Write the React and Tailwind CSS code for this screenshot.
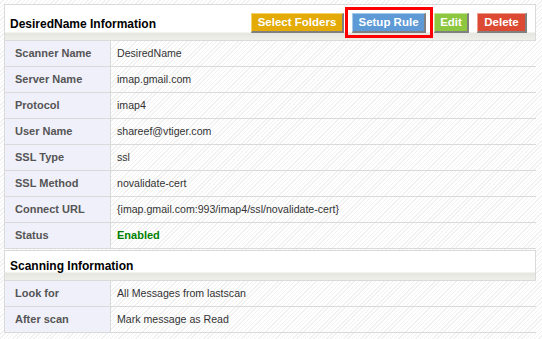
const info = [
  ['Scanner Name', 'DesiredName'],
  ['Server Name', 'imap.gmail.com'],
  ['Protocol', 'imap4'],
  ['User Name', 'shareef@vtiger.com'],
  ['SSL Type', 'ssl'],
  ['SSL Method', 'novalidate-cert'],
  ['Connect URL', '{imap.gmail.com:993/imap4/ssl/novalidate-cert}'],
  ['Status', 'Enabled'],
];

const scanning = [
  ['Look for', 'All Messages from lastscan'],
  ['After scan', 'Mark message as Read'],
];

const Button = ({ children, className }) => (
  <button
    className={`h-[20px] whitespace-nowrap px-0 text-[11.5px] font-bold text-white leading-none border-t border-l border-b-2 border-r-2 border-b-[#808080] border-r-[#808080] ${className}`}
  >
    {children}
  </button>
);

const Header = ({ title, tall, children }) => (
  <div
    className={`flex items-start justify-between border border-[#dadada] bg-[linear-gradient(to_bottom,#fff_0,#fff_calc(100%-8px),#e6e6e0_calc(100%-7px),#efefea_100%)] pl-[5px] pr-[8px] ${
      tall ? 'h-[37px]' : 'h-[31px]'
    }`}
  >
    <h2 className={`text-[12px] font-bold text-black ${tall ? 'mt-[10px]' : 'mt-[6px]'}`}>{title}</h2>
    {children}
  </div>
);

const Row = ({ label, value, status }) => (
  <div className="flex h-[26px] border-b border-l border-[#dadada]">
    <div className="flex w-[106px] items-center border-r border-[#dadada] bg-[#f0f0fa] pl-[10px] text-[11px] font-bold text-[#555]">
      {label}
    </div>
    <div
      className={`flex items-center pl-[6px] ${
        status ? 'text-[11px] font-bold text-[#008000]' : 'text-[10.6px] text-[#333]'
      }`}
    >
      {value}
    </div>
  </div>
);

export default function App() {
  return (
    <div className="h-[339px] w-[542px] overflow-hidden bg-[image:repeating-linear-gradient(135deg,#ffffff_0px,#ffffff_2px,#f1f1f1_2px,#f1f1f1_3px)] pl-[4px] pr-[6px] pt-[4px] font-['Liberation_Sans',Arial,sans-serif]">
      <Header title="DesiredName Information" tall>
        <div className="mt-[8px] flex items-center gap-[8px]">
          <Button className="w-[93px] bg-[#e4aa05] border-t-[#f3d36e] border-l-[#f3d36e]">Select Folders</Button>
          <div className="relative flex">
            <Button className="w-[74px] bg-[#5e9ad6] border-t-[#a8c8ea] border-l-[#a8c8ea]">Setup Rule</Button>
            <span className="pointer-events-none absolute -bottom-[5px] -left-[7px] -right-[7px] -top-[6px] border-[3px] border-[#ff0000]" />
          </div>
          <Button className="w-[35px] bg-[#8dc63f] border-t-[#c2e294] border-l-[#c2e294]">Edit</Button>
          <Button className="w-[50px] bg-[#dc4a34] border-t-[#ee9e90] border-l-[#ee9e90]">Delete</Button>
        </div>
      </Header>
      {info.map(([label, value]) => (
        <Row key={label} label={label} value={value} status={label === 'Status'} />
      ))}
      <div className="mt-[1px]">
        <Header title="Scanning Information" />
      </div>
      {scanning.map(([label, value]) => (
        <Row key={label} label={label} value={value} />
      ))}
    </div>
  );
}
